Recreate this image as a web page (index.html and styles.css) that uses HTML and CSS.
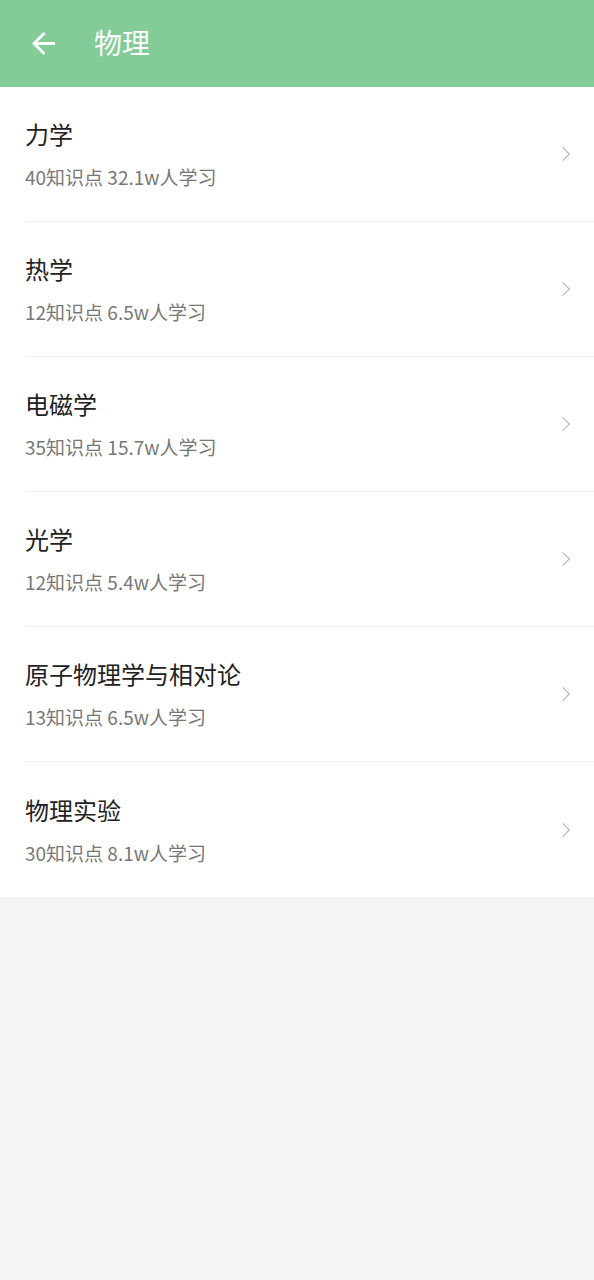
FILE: index.html
```html
<!DOCTYPE html>
<html lang="zh-CN">
<head>
    <meta charset="UTF-8">
    <meta name="viewport" content="width=device-width, initial-scale=1.0">
    <title>物理</title>
    <link rel="stylesheet" href="styles.css">
</head>
<body>
    <div class="topbar">
        <svg class="back" viewBox="4 4 16 16" width="23" height="23">
            <path d="M20 11H7.83l5.59-5.59L12 4l-8 8 8 8 1.41-1.41L7.83 13H20v-2z" fill="#fff"/>
        </svg>
        <span class="title">物理</span>
    </div>

    <ul class="list">
        <li class="item">
            <div class="text">
                <div class="name">力学</div>
                <div class="meta">40知识点 32.1w人学习</div>
            </div>
            <span class="arrow"></span>
        </li>
        <li class="item">
            <div class="text">
                <div class="name">热学</div>
                <div class="meta">12知识点 6.5w人学习</div>
            </div>
            <span class="arrow"></span>
        </li>
        <li class="item">
            <div class="text">
                <div class="name">电磁学</div>
                <div class="meta">35知识点 15.7w人学习</div>
            </div>
            <span class="arrow"></span>
        </li>
        <li class="item">
            <div class="text">
                <div class="name">光学</div>
                <div class="meta">12知识点 5.4w人学习</div>
            </div>
            <span class="arrow"></span>
        </li>
        <li class="item">
            <div class="text">
                <div class="name">原子物理学与相对论</div>
                <div class="meta">13知识点 6.5w人学习</div>
            </div>
            <span class="arrow"></span>
        </li>
        <li class="item">
            <div class="text">
                <div class="name">物理实验</div>
                <div class="meta">30知识点 8.1w人学习</div>
            </div>
            <span class="arrow"></span>
        </li>
    </ul>
</body>
</html>
```

FILE: styles.css
```css
body {
    margin: 0;
    background-color: #f4f4f6;
    font-family: Roboto, "Noto Sans CJK SC", sans-serif;
}
.topbar {
    height: 87px;
    background-color: #83cb97;
    display: flex;
    align-items: center;
    padding-left: 32px;
}
.back {
    display: block;
    margin-right: 39px;
}
.title {
    color: white;
    font-size: 28px;
    line-height: 36px;
    margin-top: 2px;
}
.list {
    list-style: none;
    margin: 0;
    padding: 0 0 0 25px;
    background: white;
}
.item {
    height: 135px;
    box-sizing: border-box;
    border-bottom: 1px solid #f0f0f0;
    display: flex;
    align-items: center;
    padding-right: 24px;
}
.item:last-child {
    border-bottom: none;
}
.text {
    flex: 1;
    padding-top: 1px;
}
.name {
    font-size: 24px;
    line-height: 32px;
    color: #222;
}
.meta {
    margin-top: 13px;
    font-family: "Noto Sans CJK SC", sans-serif;
    font-size: 19px;
    line-height: 24px;
    color: #777;
}
.arrow {
    width: 9px;
    height: 9px;
    border-top: 1.5px solid #b4b4b4;
    border-right: 1.5px solid #b4b4b4;
    transform: rotate(45deg);
    margin-right: 2px;
}
```
